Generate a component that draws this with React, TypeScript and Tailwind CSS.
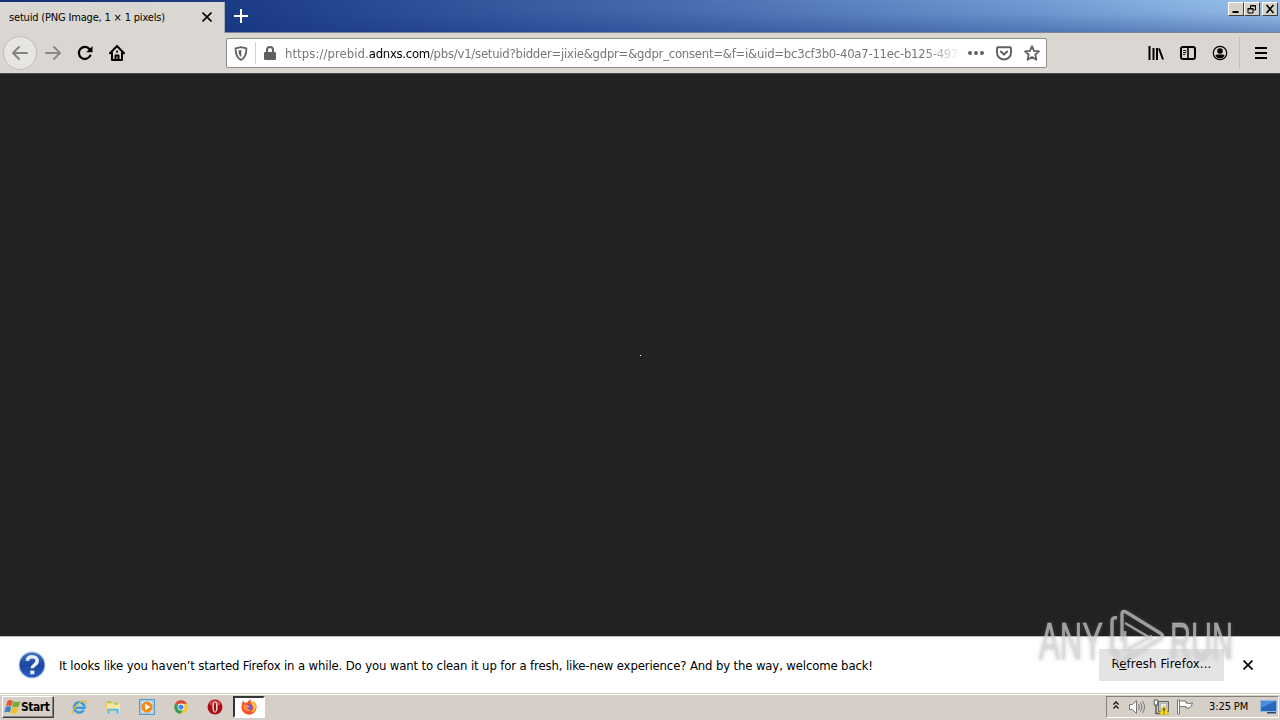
import React from 'react';

interface IconProps {
  className?: string;
}

const BackIcon: React.FC<IconProps> = ({ className }) => (
  <svg className={className} viewBox="0 0 16 16" fill="none" stroke="currentColor" strokeWidth="1.9" strokeLinecap="round" strokeLinejoin="round">
    <path d="M15 8H1.2M7 2 1 8l6 6" />
  </svg>
);

const ReloadIcon: React.FC<IconProps> = ({ className }) => (
  <svg className={className} viewBox="0 0 16 16">
    <path d="M13.3 10.6A6 6 0 1 1 12.6 4.2" fill="none" stroke="currentColor" strokeWidth="2.2" strokeLinecap="round" />
    <path d="M15.5 1v6.2H9.2z" fill="currentColor" />
  </svg>
);

const HomeIcon: React.FC<IconProps> = ({ className }) => (
  <svg className={className} viewBox="0 0 16 16" fill="none" stroke="currentColor" strokeWidth="2" strokeLinecap="round" strokeLinejoin="round">
    <path d="M1 8.2 8 1l7 7.2M3 8v7h10V8" />
    <path d="M6.5 15v-4.5h3V15" />
    <path d="M8 6.6v.2" />
  </svg>
);

const ShieldIcon: React.FC<IconProps> = ({ className }) => (
  <svg className={className} viewBox="0 0 14 16">
    <path d="M7 1.2 12.8 2.6c0 6.400-1.600 10.200-5.800 12.200C2.800 12.800 1.200 9 1.200 2.600z" fill="none" stroke="currentColor" strokeWidth="1.9" strokeLinejoin="round" />
    <path d="M7.300 4.200v7.600C5.200 10.500 4.400 8.500 4.400 4.900z" fill="currentColor" />
  </svg>
);

const LockIcon: React.FC<IconProps> = ({ className }) => (
  <svg className={className} viewBox="0 0 12 14">
    <path d="M3 7V4a3 3 0 0 1 6 0v3" fill="none" stroke="currentColor" strokeWidth="2" />
    <rect y="6" width="12" height="8" rx="1.200" fill="currentColor" />
  </svg>
);

const PocketIcon: React.FC<IconProps> = ({ className }) => (
  <svg className={className} viewBox="0 0 16 15" fill="none" stroke="currentColor" strokeWidth="2" strokeLinecap="round" strokeLinejoin="round">
    <path d="M2.200 1.200h11.600q1.200 0 1.200 1.200V6.500a7 7 0 0 1-14 0V2.400q0-1.200 1.200-1.200z" />
    <path d="m4.800 5.600 3.200 3 3.200-3" />
  </svg>
);

const StarIcon: React.FC<IconProps> = ({ className }) => (
  <svg className={className} viewBox="0 0 16 16" fill="none" stroke="currentColor" strokeWidth="1.800" strokeLinejoin="round">
    <path d="m8 1.200 2 4.600 5 .5-3.700 3.400 1.100 5L8 12.100l-4.400 2.600 1.100-5L1 6.300l5-.5z" />
  </svg>
);

const LibraryIcon: React.FC<IconProps> = ({ className }) => (
  <svg className={className} viewBox="0 0 16 16" stroke="currentColor" strokeWidth="2">
    <path d="M1.500 1v14M5.500 3v12M9 3v12M11 3.500l4 11" />
  </svg>
);

const SidebarIcon: React.FC<IconProps> = ({ className }) => (
  <svg className={className} viewBox="0 0 16 14" fill="none" stroke="currentColor">
    <rect x="1" y="1" width="14" height="12" rx="2" strokeWidth="2" />
    <path d="M8 1v12" strokeWidth="1.600" />
    <path d="M3.200 4.500h3M3.200 6.500h3M3.200 8.500h2" />
  </svg>
);

const AccountIcon: React.FC<IconProps> = ({ className }) => (
  <svg className={className} viewBox="0 0 16 16">
    <circle cx="8" cy="8" r="6.700" fill="none" stroke="currentColor" strokeWidth="1.200" />
    <circle cx="8" cy="6" r="2.800" fill="currentColor" />
    <path d="M3.500 10.500C4.500 9 6 9.500 8 9.500s3.500-.5 4.500 1c-1 2-2.500 2.800-4.500 2.800s-3.500-.8-4.500-2.800z" fill="currentColor" />
  </svg>
);

const CloseIcon: React.FC<IconProps> = ({ className }) => (
  <svg className={className} viewBox="0 0 10 10" stroke="currentColor" strokeWidth="1.600">
    <path d="m.5.5 9 9m0-9-9 9" />
  </svg>
);

const WindowsLogo: React.FC<IconProps> = ({ className }) => (
  <svg className={className} viewBox="0 0 17 16">
    <path d="M3.500 1.800Q6 .2 8.700 1.900L7.400 7.300Q4.700 5.800 2 7.200z" fill="#e2582b" />
    <path d="M9.300 2.300q3 1.500 7 0l-1.500 5.300q-3.500 1.400-6.800 0z" fill="#79ae36" />
    <path d="M1.800 7.900Q4.500 6.500 7.200 8L5.800 13.500Q3 12 .3 13.400z" fill="#3c83cb" />
    <path d="M7.800 8.300q3 1.400 6.700 0L12.900 14q-3.300 1.400-6.400 0z" fill="#f5bd28" />
  </svg>
);

const ExplorerLogo: React.FC<IconProps> = ({ className }) => (
  <svg className={className} viewBox="0 0 18 18" fill="none">
    <path d="M14.300 12.200A5.800 5.800 0 1 1 15 9.700H5.500" stroke="#3a9bdc" strokeWidth="2.900" />
    <path d="M5.300 8.300h9" stroke="#8fd0f3" strokeWidth="1" />
    <path d="M2.600 16.200C-1 14 9 2.500 15.200 1.800c2.200-.2 2 2 .9 3.800" stroke="#e9b93b" strokeWidth="1.500" />
  </svg>
);

const FolderLogo: React.FC<IconProps> = ({ className }) => (
  <svg className={className} viewBox="0 0 16 16">
    <path d="M1 2h5l1 1.500h7V13H1z" fill="#e6c664" />
    <path d="M2 4.500h13V12H2z" fill="#f8e7a0" />
    <path d="M3 3h3M9 5h4" stroke="#76b56a" strokeWidth="1.200" />
    <path d="M2 15v-4q0-1.500 1.500-1.500h9Q14 9.500 14 11v4h-3v-3H5v3z" fill="#69b8df" stroke="#c9eafa" strokeWidth=".5" />
  </svg>
);

const MediaLogo: React.FC<IconProps> = ({ className }) => (
  <svg className={className} viewBox="0 0 16 16">
    <rect x=".5" y=".5" width="15" height="15" fill="#b7d8ef" stroke="#5a9ac8" />
    <rect x="2" y="2" width="12" height="12" fill="#dcecf6" stroke="#79acd0" strokeWidth=".6" />
    <circle cx="8" cy="8" r="5.600" fill="#f58a18" />
    <path d="M6.200 4.700v6.600L11.500 8z" fill="#fff" />
  </svg>
);

const ChromeLogo: React.FC<IconProps> = ({ className }) => (
  <svg className={className} viewBox="0 0 16 16">
    <circle cx="8" cy="8" r="6.700" fill="#f9c52c" />
    <path d="M8 8 2.200 4.600A6.700 6.700 0 0 1 13.900 4.800H8z" fill="#dc4437" />
    <path d="M2.200 4.600A6.700 6.700 0 0 0 7.500 14.700L10.800 9.600 8 8z" fill="#2f9e58" />
    <circle cx="8" cy="8" r="3.400" fill="#fff" />
    <circle cx="8" cy="8" r="2.600" fill="#4587ef" />
  </svg>
);

const OperaLogo: React.FC<IconProps> = ({ className }) => (
  <svg className={className} viewBox="0 0 16 16">
    <circle cx="8" cy="8" r="7.500" fill="#a90f17" />
    <path d="M2 5a7 7 0 0 1 12 0Q8 9 2 5z" fill="#d8474a" />
    <ellipse cx="8" cy="8" rx="2.600" ry="5.700" fill="#f4dddd" />
    <ellipse cx="8" cy="8" rx="1.100" ry="4.700" fill="#951017" />
  </svg>
);

const FirefoxLogo: React.FC<IconProps> = ({ className }) => (
  <svg className={className} viewBox="0 0 16 16">
    <path d="M1 5Q1 2.500 2.500 1.500q0 1.500 1 2.200Q5 3.300 6 3.800 8 1 9.500.3q0 2 2 3.200.5-.8.400-1.500C15 4 15.800 6.500 15.500 9A7.600 7.600 0 0 1 .5 9.500Q.3 7 1 5z" fill="#f8532f" />
    <path d="M9.500.3q0 2 2 3.200.5-.8.400-1.500C15 4 15.500 7 14.500 10q-1 3-4.500 3.500 4-4 1-7.500-2-2-1.500-5.700z" fill="#ffc42d" />
    <circle cx="8.200" cy="8.400" r="3.300" fill="#7954d8" />
    <path d="M2 6q3-1 4.500.2L9 7Q8 8.600 6 8.700q1 2.500 4 2-2 2.500-5 .9Q2 10 2 6z" fill="#ff922e" />
  </svg>
);

const HelpIcon: React.FC<IconProps> = ({ className }) => (
  <svg className={className} viewBox="0 0 28 28">
    <defs>
      <linearGradient id="help" x1="0" y1="0" x2="0" y2="1">
        <stop offset="0" stopColor="#3b72c6" />
        <stop offset=".5" stopColor="#1c459e" />
        <stop offset="1" stopColor="#2a5cc4" />
      </linearGradient>
    </defs>
    <circle cx="14" cy="14" r="13.400" fill="#a3bbe0" />
    <circle cx="14" cy="14" r="12.300" fill="url(#help)" />
    <path d="M9.200 9.800C9.700 6.500 11.500 5.800 14.200 5.800c3 0 5 1.700 5 4.200 0 4-4.900 3.700-4.900 7.300" fill="none" stroke="#e8effa" strokeWidth="3.600" />
    <rect x="12.200" y="19.500" width="4.200" height="3.800" rx=".6" fill="#e8effa" />
  </svg>
);

const SpeakerIcon: React.FC<IconProps> = ({ className }) => (
  <svg className={className} viewBox="0 0 16 16" fill="none" stroke="#777">
    <path d="M.5 5.500h3l4-4v13l-4-4h-3z" fill="#fff" />
    <path d="M9.500 5q2 3 0 6M11.500 3.500q3 4.500 0 9M13.500 2q4 6 0 12" />
  </svg>
);

const NetworkIcon: React.FC<IconProps> = ({ className }) => (
  <svg className={className} viewBox="0 0 16 16">
    <path d="M5.500 2.500h10v10h-10z" fill="#c9c9c4" stroke="#666" />
    <path d="M7.500 4.500h6v5h-6z" fill="#eee" stroke="#999" strokeWidth=".6" />
    <path d="M3 5v9.500h5" fill="none" stroke="#555" strokeWidth="1.400" />
    <path d="M1.200 1h3.600v5H1.200z" fill="#fff" stroke="#555" />
    <path d="M11 6.500 15.800 15.500H6.200z" fill="#ffe016" stroke="#c8a100" strokeWidth=".6" />
    <path d="M11 9v3.500m0 1v1" stroke="#222" strokeWidth="1.200" />
  </svg>
);

const FlagIcon: React.FC<IconProps> = ({ className }) => (
  <svg className={className} viewBox="0 0 16 16" fill="#fff" stroke="#777">
    <path d="M.5 1h2v14h-2z" />
    <path d="M2.500 2H9v2q3 1 6.500 0Q14.500 8.500 12 9H9V7.500H2.500z" />
  </svg>
);

const Watermark: React.FC<IconProps> = ({ className }) => (
  <svg className={className} viewBox="0 0 200 70" fill="none" style={{ filter: 'drop-shadow(0 0 2px rgb(110 110 110 / .5))' }}>
    <g fill="#d8d8d8" fillOpacity=".66" stroke="#d8d8d8" strokeOpacity=".4" strokeWidth="1" fontFamily="Liberation Sans Narrow, Liberation Sans, sans-serif" fontSize="52">
      <text x="4" y="54" textLength="64" lengthAdjust="spacingAndGlyphs">ANY</text>
      <text x="135" y="54" textLength="63" lengthAdjust="spacingAndGlyphs">RUN</text>
    </g>
    <g stroke="#d8d8d8" strokeOpacity=".66" strokeWidth="3.400" strokeLinejoin="round">
      <path d="M77 49V16q0-4 5-3" />
      <path d="M87 36V9q0-4 4-2l34 21q5 3 0 6L88 56" />
      <path d="m90 18 27 16M90 26v20l27-15" strokeWidth="2.600" />
      <path d="M82 58V44" />
    </g>
  </svg>
);

const pinned = [ExplorerLogo, FolderLogo, MediaLogo, ChromeLogo, OperaLogo];

const TitleBar = () => (
  <div className="flex h-[33px] items-start bg-[linear-gradient(90deg,#152f78_0%,#1c3d86_19%,#4467ad_50%,#6f9ad2_80%,#9ac4ec_100%)]">
    <div className="mt-[2px] flex h-[31px] w-[225px] items-center border-r border-[#a9adb5] bg-[#dad7d2] pl-[9px] pr-3">
      <span className="mt-px flex-1 whitespace-nowrap text-[11px] tracking-[-0.18px]">setuid (PNG Image, 1 × 1 pixels)</span>
      <CloseIcon className="mb-px h-[10px] w-[10px]" />
    </div>
    <div className="flex h-[33px] flex-1 items-start justify-between border-b border-[#7f8795] bg-[linear-gradient(180deg,rgba(18,50,125,0)_0%,rgba(18,50,125,.06)_40%,rgba(18,50,125,.36)_100%)]">
      <svg className="ml-[9px] mt-[9px] h-[14px] w-[14px]" viewBox="0 0 14 14" stroke="#fff" strokeWidth="2">
        <path d="M7 0v14M0 7h14" />
      </svg>
      <div className="mr-[2px] mt-[2px] flex text-black">
        <WindowButton>
          <path d="M3 9h6" strokeWidth="2" />
        </WindowButton>
        <WindowButton>
          <path d="M5 3h5v4h-2M5 2.500h5.500M5 3v2M2.500 6h5v4h-5zM2 5.500h6" />
        </WindowButton>
        <div className="w-[2px]" />
        <WindowButton>
          <path d="m3 2 7 8m0-8-7 8" strokeWidth="1.600" />
        </WindowButton>
      </div>
    </div>
  </div>
);

const WindowButton: React.FC<{ children: React.ReactNode }> = ({ children }) => (
  <div className="h-[14px] w-4 border border-b-[#404040] border-l-white border-r-[#404040] border-t-white bg-[#d6d1c9]">
    <svg className="h-3 w-[14px]" viewBox="0 0 13 12" fill="none" stroke="currentColor">{children}</svg>
  </div>
);

const NavBar = () => (
  <div className="flex h-10 items-center bg-[#dad7d2] text-black">
    <div className="ml-[3px] flex h-[34px] w-[34px] items-center justify-center rounded-full border border-[#c0bdb9] bg-[#e7e5e2] text-[#858380]">
      <BackIcon className="h-4 w-4" />
    </div>
    <BackIcon className="ml-2 h-4 w-4 rotate-180 text-[#8b8986]" />
    <ReloadIcon className="ml-4 h-4 w-4" />
    <HomeIcon className="ml-4 h-4 w-4" />
    <div className="ml-[101px] flex h-[30px] w-[821px] items-center rounded-[2px] border border-[#8f8e8b] bg-white text-[#62615f]">
      <ShieldIcon className="ml-[7px] h-[15px] w-[14px]" />
      <div className="ml-[7px] h-[22px] w-px bg-[#d0d0d0]" />
      <LockIcon className="ml-[8px] h-[14px] w-3" />
      <div className="ml-[9px] mt-[2px] w-[676px] overflow-hidden whitespace-nowrap text-[13px] tracking-[-0.25px] text-[#777] [mask-image:linear-gradient(90deg,#000_640px,transparent_676px)]">
        <span className="tracking-[0.06px]">https://prebid.</span>
        <span className="tracking-[-0.29px] text-black">adnxs.com</span>/pbs/v1/setuid?bidder=jixie&amp;gdpr=&amp;gdpr_consent=&amp;f=i&amp;uid=bc3cf3b0-40a7-11ec-b125-4974
      </div>
      <svg className="ml-[6px] h-4 w-[18px] shrink-0" viewBox="0 0 18 16" fill="currentColor">
        <circle cx="3" cy="8" r="2" />
        <circle cx="9" cy="8" r="2" />
        <circle cx="15" cy="8" r="2" />
      </svg>
      <PocketIcon className="ml-[11px] h-[15px] w-4 shrink-0" />
      <StarIcon className="ml-3 h-4 w-4 shrink-0" />
    </div>
    <LibraryIcon className="ml-[101px] h-4 w-4" />
    <SidebarIcon className="ml-4 h-[14px] w-4" />
    <AccountIcon className="ml-4 h-4 w-4" />
    <div className="ml-[11px] h-8 w-px bg-[#c3c0bc]" />
    <svg className="ml-[15px] h-3 w-3" viewBox="0 0 12 12" stroke="currentColor" strokeWidth="2">
      <path d="M0 1h12M0 6h12M0 11h12" />
    </svg>
  </div>
);

const NotificationBar = () => (
  <div className="flex h-[57px] items-center border-t border-[#bbb] bg-white">
    <HelpIcon className="ml-[18px] h-7 w-7" />
    <span className="ml-[13px] mt-[2px] flex-1 whitespace-nowrap text-[13px] tracking-[-0.137px]">
      It looks like you haven’t started Firefox in a while. Do you want to clean it up for a fresh, like-new experience? And by the way, welcome back!
    </span>
    <button className="mb-px h-8 w-[125px] whitespace-nowrap bg-[#e4e4e4] pb-px text-[13px] tracking-[0.13px]">
      R<span className="underline">e</span>fresh Firefox...
    </button>
    <CloseIcon className="ml-[19px] mr-[27px] h-[10px] w-[10px]" />
  </div>
);

const Taskbar = () => (
  <div className="flex h-[27px] items-center border-t border-[#d5d1ca] bg-[#d5cfc7] pb-px text-black shadow-[inset_0_1px_0_#fff]">
    <button className="ml-[2px] mt-px flex h-[22px] w-[52px] items-center border border-b-[#404040] border-l-white border-r-[#404040] border-t-white pl-px shadow-[inset_-1px_-1px_0_#85817c]">
      <WindowsLogo className="h-4 w-[17px] shrink-0" />
      <span className="text-[12px] font-bold tracking-[-0.45px]">Start</span>
    </button>
    <div className="ml-[17px] mt-px flex items-center gap-[18px]">
      {pinned.map((Logo, i) => <Logo key={i} className="h-4 w-4" />)}
    </div>
    <div className="ml-[10px] mt-px flex h-[22px] w-8 items-center justify-center border-2 border-b-white border-l-[#353535] border-r-white border-t-[#353535] bg-white">
      <FirefoxLogo className="h-4 w-4" />
    </div>
    <div className="ml-auto mr-px mt-px flex h-[22px] w-[173px] items-center border border-b-white border-l-[#85817c] border-r-white border-t-[#85817c]">
      <svg className="mb-1 ml-[6px] h-[8px] w-[6px]" viewBox="0 0 7 9" fill="none" stroke="#111" strokeWidth="1.500">
        <path d="m.5 4 3-3 3 3m-6 4.500 3-3 3 3" />
      </svg>
      <SpeakerIcon className="ml-[10px] h-4 w-4" />
      <NetworkIcon className="ml-[8px] h-4 w-4" />
      <FlagIcon className="ml-[8px] h-4 w-4" />
      <span className="ml-[16px] w-[45px] whitespace-nowrap text-[11px] tracking-[-0.1px]">3:25 PM</span>
      <svg className="ml-[6px] h-[14px] w-[17px]" viewBox="0 0 17 14">
        <rect x=".5" y=".5" width="16" height="11" fill="#2867bd" stroke="#95b6d8" />
        <path d="M1 1h15L1 8z" fill="#4a8edb" />
        <path d="M7 12h9v1.500H7z" fill="#27446b" />
      </svg>
    </div>
  </div>
);

const App = () => (
  <div className="relative flex h-[720px] w-[1280px] flex-col overflow-hidden bg-[#222] font-['DejaVu_Sans_Condensed','DejaVu_Sans',sans-serif] text-black">
    <TitleBar />
    <NavBar />
    <main className="flex flex-1 items-center justify-center border-t border-[#4d4c4b]">
      <div className="ml-px h-px w-px bg-white" />
    </main>
    <NotificationBar />
    <Taskbar />
    <Watermark className="pointer-events-none absolute left-[1035px] top-[605px] h-[70px] w-[200px]" />
  </div>
);

export default App;
